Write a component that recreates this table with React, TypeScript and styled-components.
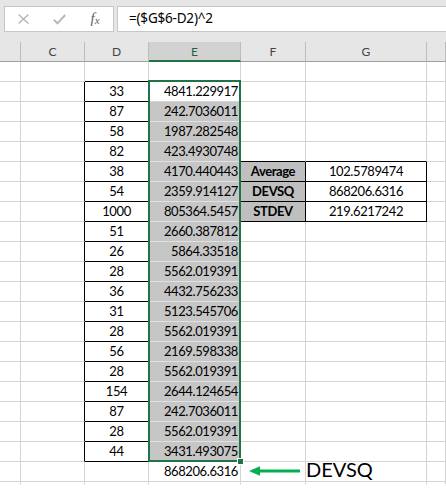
import React from "react";
import styled, { createGlobalStyle } from "styled-components";

const GlobalStyle = createGlobalStyle`
  html, body { margin: 0; padding: 0; background: #ffffff; }
  body { font-family: Lato, "Liberation Sans", sans-serif; color: #000; overflow: hidden; }
  * { box-sizing: border-box; }
`;

const GRID = "#d4d4d4";
const BLACK = "#000000";
const GREEN = "#217346";
const COLS = "21px 64px 64px 92px 65px 121px 1fr";
const LETTERS = ["", "C", "D", "E", "F", "G", ""];

const Page = styled.div`
  width: 446px;
  height: 498px;
  overflow: hidden;
  background: #fff;
`;

const Toolbar = styled.div`
  display: flex;
  align-items: flex-start;
  gap: 3px;
  height: 32px;
  padding: 6px 0 0 4px;
  background: #e6e6e6;
  overflow: hidden;
`;

const ButtonBox = styled.div`
  display: flex;
  flex: 0 0 110px;
  height: 26px;
  border: 1px solid #c6c6c6;
  background: #ffffff;
`;

const IconSlot = styled.div`
  display: flex;
  align-items: center;
  justify-content: center;
  width: 36px;
  height: 24px;
`;

const Fx = styled.span`
  font-family: "Liberation Serif", "DejaVu Serif", serif;
  font-style: italic;
  font-size: 15px;
  color: #5f5f5f;
  line-height: 1;
  margin-top: -1px;
  small {
    font-size: 11px;
    position: relative;
    top: 1px;
    margin-left: 0px;
  }
`;

const FormulaBox = styled.div`
  flex: 1 0 auto;
  height: 26px;
  margin-right: -4px;
  border: 1px solid #c6c6c6;
  background: #ffffff;
  padding-left: 11px;
  font-family: "Noto Sans", "Open Sans", sans-serif;
  font-size: 13.5px;
  letter-spacing: -0.2px;
  line-height: 23px;
  color: #000;
`;

const HeaderBand = styled.div`
  background: #e6e6e6;
  padding-top: 10px;
`;

const HeaderRow = styled.div`
  display: grid;
  grid-template-columns: ${COLS};
  height: 20px;
`;

const ColHeader = styled.div<{ $active?: boolean }>`
  height: 20px;
  border-right: 1px solid #bdbdbd;
  border-bottom: ${(p) => (p.$active ? `2px solid ${GREEN}` : "1px solid #9f9f9f")};
  background: ${(p) => (p.$active ? "#d2d2d2" : "#e6e6e6")};
  color: ${(p) => (p.$active ? "#2c5f3f" : "#444444")};
  font-family: Lato, "Liberation Sans", sans-serif;
  font-size: 12px;
  line-height: 19px;
  text-align: center;
`;

const Sheet = styled.div`
  position: relative;
  display: grid;
  grid-template-columns: ${COLS};
  grid-template-rows: repeat(21, 20px) 3px;
`;

const Cell = styled.div<{
  $r: string;
  $b: string;
  $fill: string;
  $align: "left" | "center" | "right";
  $bold?: boolean;
}>`
  border-right: 1px solid ${(p) => p.$r};
  border-bottom: 1px solid ${(p) => p.$b};
  background: ${(p) => p.$fill};
  text-align: ${(p) => p.$align};
  font-weight: ${(p) => (p.$bold ? 700 : 400)};
  font-family: Lato, "Liberation Sans", sans-serif;
  font-size: 13px;
  letter-spacing: -0.4px;
  line-height: 19px;
  padding: 0 2px;
  white-space: nowrap;
  min-width: 0;
`;

const Note = styled.span`
  display: block;
  text-align: left;
  margin-left: -2px;
  font-size: 20px;
  line-height: 15px;
  letter-spacing: 0;
`;

const Arrow = styled.svg`
  display: block;
  margin: 2px 0 0 4px;
`;

const Selection = styled.div`
  position: absolute;
  border: 2px solid ${GREEN};
  pointer-events: none;
`;

const FillHandle = styled.div`
  position: absolute;
  width: 7px;
  height: 7px;
  background: ${GREEN};
  border: 1px solid #ffffff;
`;

const D = [33, 87, 58, 82, 38, 54, 1000, 51, 26, 28, 36, 31, 28, 56, 28, 154, 87, 28, 44];
const E = [
  "4841.229917", "242.7036011", "1987.282548", "423.4930748", "4170.440443",
  "2359.914127", "805364.5457", "2660.387812", "5864.33518", "5562.019391",
  "4432.756233", "5123.545706", "5562.019391", "2169.598338", "5562.019391",
  "2644.124654", "242.7036011", "5562.019391", "3431.493075",
];
const STATS: Record<number, [string, string]> = {
  6: ["Average", "102.5789474"],
  7: ["DEVSQ", "868206.6316"],
  8: ["STDEV", "219.6217242"],
};

// column indices: 0=B stub, 1=C, 2=D, 3=E, 4=F, 5=G, 6=H
const boxed = (r: number, c: number) =>
  (c === 2 && r >= 2 && r <= 20) || ((c === 4 || c === 5) && r >= 6 && r <= 8);

const selected = (r: number, c: number) => c === 3 && r >= 3 && r <= 20;

const ROWS = Array.from({ length: 22 }, (_, i) => i + 1);

function content(r: number, c: number): React.ReactNode {
  if (c === 2 && r >= 2 && r <= 20) return D[r - 2];
  if (c === 3 && r >= 2 && r <= 20) return E[r - 2];
  if (c === 3 && r === 21) return "868206.6316";
  if (c === 4 && STATS[r]) return STATS[r][0];
  if (c === 5 && STATS[r]) return STATS[r][1];
  if (c === 4 && r === 21)
    return (
      <Arrow width="56" height="14" viewBox="0 0 56 14">
        <path d="M2 7 L13 2.3 L13 5.4 L53 5.4 L53 8.6 L13 8.6 L13 11.7 Z" fill="#00b050" />
      </Arrow>
    );
  if (c === 5 && r === 21) return <Note>DEVSQ</Note>;
  return null;
}

function align(c: number): "left" | "center" | "right" {
  if (c === 3) return "right";
  if (c === 2 || c === 4 || c === 5) return "center";
  return "left";
}

export default function App() {
  return (
    <Page>
      <GlobalStyle />
      <Toolbar>
        <ButtonBox>
          <IconSlot>
            <svg width="11" height="10" viewBox="0 0 11 10">
              <path d="M0.6 0.6 L10.4 9.4 M10.4 0.6 L0.6 9.4" stroke="#b3b3b3" strokeWidth="1.3" fill="none" />
            </svg>
          </IconSlot>
          <IconSlot>
            <svg width="13" height="11" viewBox="0 0 13 11">
              <path d="M0.8 5.8 L4.4 9.4 L12.2 1" stroke="#b8b8b8" strokeWidth="2" fill="none" />
            </svg>
          </IconSlot>
          <IconSlot>
            <Fx>
              f<small>x</small>
            </Fx>
          </IconSlot>
        </ButtonBox>
        <FormulaBox>=($G$6-D2)^2</FormulaBox>
      </Toolbar>
      <HeaderBand>
        <HeaderRow>
          {LETTERS.map((l, i) => (
            <ColHeader key={i} $active={l === "E"}>
              {l}
            </ColHeader>
          ))}
        </HeaderRow>
      </HeaderBand>
      <Sheet>
        {ROWS.map((r) =>
          LETTERS.map((_, c) => {
            const last = r === 22;
            const right = boxed(r, c) || boxed(r, c + 1) ? BLACK : GRID;
            let bottom = boxed(r, c) || boxed(r + 1, c) ? BLACK : GRID;
            if (selected(r, c) && r < 20) bottom = "#e2e2e2";
            if (last) bottom = "transparent";
            const fill = selected(r, c) ? "#c6c6c6" : c === 4 && STATS[r] ? "#bfbfbf" : "#ffffff";
            return (
              <Cell
                key={`${r}-${c}`}
                $r={right}
                $b={bottom}
                $fill={fill}
                $align={align(c)}
                $bold={c === 4 && !!STATS[r]}
              >
                {content(r, c)}
              </Cell>
            );
          })
        )}
        <Selection style={{ left: 148, top: 18, width: 93, height: 382 }} />
        <FillHandle style={{ left: 237, top: 396 }} />
      </Sheet>
    </Page>
  );
}
